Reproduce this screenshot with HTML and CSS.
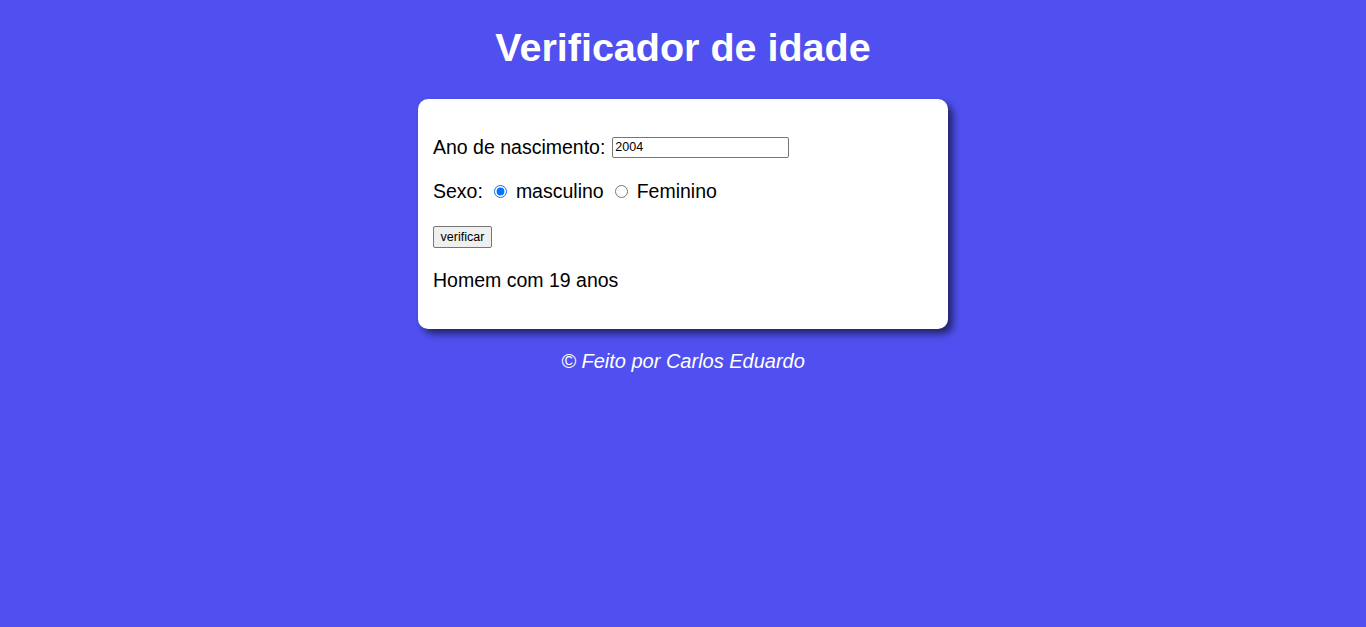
FILE: index.html
```html
<!DOCTYPE html>
<html lang="pt-BR">
<head>
<meta charset="utf-8">
<title>Verificador de idade</title>
<link rel="stylesheet" href="styles.css">
</head>
<body>
<header class="top">
  <h1 class="title">Verificador de idade</h1>
</header>
<main class="card">
  <div class="row">
    <label for="ano">Ano de nascimento:</label>
    <input class="year" type="text" id="ano" value="2004">
  </div>
  <div class="row">
    <span>Sexo:</span>
    <input class="radio" type="radio" name="sexo" id="m" checked>
    <label for="m">masculino</label>
    <input class="radio" type="radio" name="sexo" id="f">
    <label for="f">Feminino</label>
  </div>
  <div class="row row-btn">
    <button class="btn" type="button">verificar</button>
  </div>
  <div class="row result">Homem com 19 anos</div>
</main>
<footer class="foot">&copy; Feito por Carlos Eduardo</footer>
</body>
</html>
```
FILE: styles.css
```css
html, body {
  margin: 0;
  padding: 0;
}
body {
  background: #4f50ef;
  font-family: "Liberation Sans", Arial, sans-serif;
  color: #000;
  display: flex;
  flex-direction: column;
  align-items: center;
  min-height: 627px;
}
.top {
  margin-top: 24px;
  height: 46px;
}
.title {
  margin: 0;
  color: #fff;
  font-size: 39.5px;
  line-height: 46px;
  font-weight: bold;
  text-align: center;
}
.card {
  margin-top: 29px;
  width: 530px;
  height: 230px;
  box-sizing: border-box;
  background: #fff;
  border-radius: 10px;
  box-shadow: 5px 5px 7px rgba(0, 0, 0, 0.55);
  padding: 37px 15px 0;
  display: flex;
  flex-direction: column;
  gap: 22px;
  font-size: 19.5px;
}
.row {
  height: 22px;
  line-height: 22px;
  display: flex;
  align-items: center;
  white-space: nowrap;
}
.year {
  margin: 0 0 0 7px;
  width: 177px;
  height: 21px;
  box-sizing: border-box;
  border: 1px solid #767676;
  border-radius: 2px;
  padding: 1px 2px;
  font-family: "Liberation Sans", Arial, sans-serif;
  font-size: 12.5px;
  color: #000;
}
.radio {
  margin: 0 9px 0 11px;
  width: 13px;
  height: 13px;
}
.row-btn {
  margin-top: 2px;
  margin-bottom: -1px;
}
.btn {
  height: 22px;
  width: 59px;
  padding: 0;
  font-family: "Liberation Sans", Arial, sans-serif;
  font-size: 12.5px;
  color: #000;
  background: #efefef;
  border: 1px solid #767676;
  border-radius: 2px;
}
.foot {
  margin-top: 21px;
  color: #fff;
  font-style: italic;
  font-size: 20px;
  line-height: 22px;
  text-align: center;
}
```
